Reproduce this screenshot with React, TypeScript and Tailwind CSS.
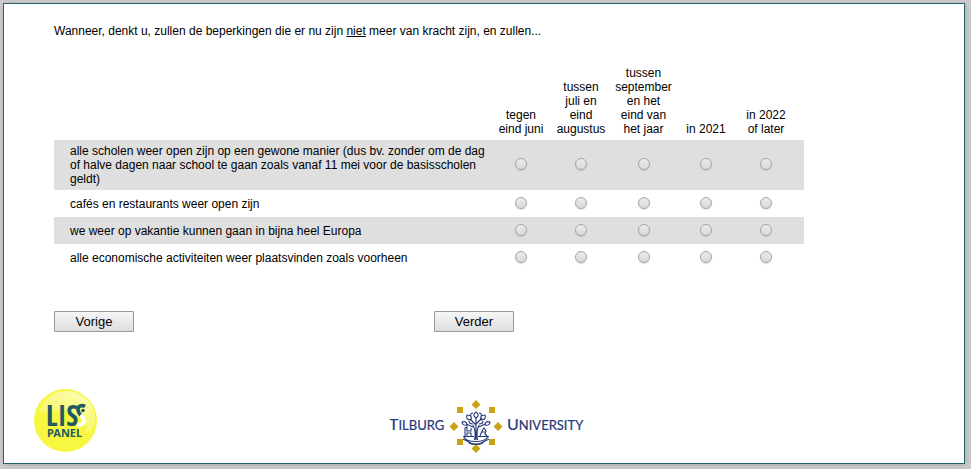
import React from "react";

const columns = [
  { label: "tegen eind juni", width: "w-[60px]" },
  { label: "tussen juli en eind augustus", width: "w-[60px]" },
  { label: "tussen september en het eind van het jaar", width: "w-[65px]" },
  { label: "in 2021", width: "w-[60px]" },
  { label: "in 2022 of later", width: "w-[60px]" },
];

const rows = [
  "alle scholen weer open zijn op een gewone manier (dus bv. zonder om de dag of halve dagen naar school te gaan zoals vanaf 11 mei voor de basisscholen geldt)",
  "cafés en restaurants weer open zijn",
  "we weer op vakantie kunnen gaan in bijna heel Europa",
  "alle economische activiteiten weer plaatsvinden zoals voorheen",
];

function NavButton({ children }: { children: string }) {
  return (
    <button
      type="button"
      className="h-[21px] w-20 rounded-[1px] border border-[#999] bg-linear-to-b from-[#f6f6f6] to-[#dedede] text-[13px] leading-[19px]"
    >
      {children}
    </button>
  );
}

function LissLogo() {
  return (
    <svg width="64" height="64" viewBox="0 0 64 64" role="img" aria-label="LISS Panel">
      <defs>
        <linearGradient id="liss-gloss" x1="0.8" y1="0" x2="0.3" y2="1">
          <stop offset="0" stopColor="#fff" stopOpacity="0.6" />
          <stop offset="1" stopColor="#fff" stopOpacity="0.05" />
        </linearGradient>
      </defs>
      <circle cx="31.500" cy="31.500" r="31.500" fill="#f7f742" />
      <path d="M5 24C9 9 20 2 33 2C50 2 61 16 61 30C61 37 57 42 52 45C55 27 33 17 5 24Z" fill="url(#liss-gloss)" />
      <text fill="#205a60" fontWeight="700">
        <tspan x="12" y="37" fontSize="29" fontFamily="'Open Sans Condensed','Liberation Sans Narrow','Liberation Sans',sans-serif">
          LIS
        </tspan>
        <tspan x="13" y="48" fontSize="11" fontFamily="'Noto Sans',sans-serif">
          PANEL
        </tspan>
      </text>
      <g fill="none" strokeWidth="3.600">
        <path d="M51 17.500C48 15.500 44 17 44 20.500C44 23.500 45.500 25 47.500 27" stroke="#205a60" />
        <path d="M46.500 26C49.500 28.500 50.500 30.500 50 33C49 36 46 36.500 43 35.500" stroke="#fff" />
      </g>
      <circle cx="49" cy="21.500" r="1.800" fill="#205a60" />
    </svg>
  );
}

function TilburgLogo() {
  return (
    <svg width="196" height="54" viewBox="0 0 196 54" role="img" aria-label="Tilburg University">
      <g fontFamily="'Lato',sans-serif" fill="#253878" stroke="#253878" strokeWidth="0.200">
        <text x="-1" y="30" fontSize="16">
          T<tspan fontSize="13">ILBURG</tspan>
        </text>
        <text x="117" y="30" fontSize="16">
          U<tspan fontSize="13">NIVERSITY</tspan>
        </text>
      </g>
      <g fill="#c9a416">
        <path d="M86 0l4.500 4.500L86 9l-4.500-4.500zM86 44l4.500 4.500L86 53l-4.500-4.500zM64 22l4.500 4.500L64 31l-4.500-4.500zM108 22l4.500 4.500L108 31l-4.500-4.500z" />
        <path d="M67 7h6v6h-6zM99 7h6v6h-6zM67 39h6v6h-6zM99 39h6v6h-6z" />
      </g>
      <g fill="none" stroke="#253878" strokeWidth="1.100">
        <path d="M84.500 40C86 34 85 29 83 25M87.500 40C86.500 34 87 29 89 25M86 40V18M86 25L80 19M86 24L92 18M83 27L76 24M89 27L95 24" />
        <path d="M86 18c-3-2-3-4 0-6c3 2 3 4 0 6zM81 20c-4 0-5-2-4-5c4 0 5 2 4 5zM91 20c4 0 5-2 4-5c-4 0-5 2-4 5zM77 25c-3 1-5-1-5-3c3-1 5 0 5 3zM95 25c3 1 5-1 5-3c-3-1-5 0-5 3zM83 24c-3 0-4-1-4-3M89 24c3 0 4-1 4-3M81 16c-1-2 0-3 2-3M91 16c1-2 0-3-2-3" />
        <path d="M75 36V28l2-1v4h4v-3M77 36v-3h4v3M90 36l2-5l2-3l2 3l-1 3l2 2M92 32h4" />
        <path d="M73 36.500h11M88 36.500h11M74 37c3 6 20 6 24 0M73 39l4 2c5 4 13 4 18 0l4-2M79 43c4 2 10 2 14 0" />
      </g>
    </svg>
  );
}

export default function App() {
  return (
    <div className="min-h-screen bg-[#cccbcc] pt-[3px] pr-1.5 pb-[5px] pl-[3px] font-['Liberation_Sans',Arial,sans-serif] text-xs leading-[14px] text-black">
      <main className="border border-[#246468] bg-white shadow-[1px_1px_5px_#aaaaaa]">
        <form className="px-[50px] pt-5" onSubmit={(e) => e.preventDefault()}>
          <p>
            Wanneer, denkt u, zullen de beperkingen die er nu zijn <u>niet</u> meer van kracht zijn, en zullen...
          </p>

          <table className="mt-7 w-full max-w-[750px] table-fixed border-collapse">
            <thead>
              <tr>
                <td />
                {columns.map((column, c) => (
                  <th
                    key={column.label}
                    id={`column-${c}`}
                    scope="col"
                    className={`${column.width} px-1 pb-1 text-center align-bottom font-normal`}
                  >
                    {column.label}
                  </th>
                ))}
                <td className="w-2" />
              </tr>
            </thead>
            <tbody>
              {rows.map((row, r) => (
                <tr key={row} className="h-[27px] odd:bg-[#dfdfdf]">
                  <th id={`row-${r}`} scope="row" className="py-1 pr-1 pl-4 text-left font-normal">
                    {row}
                  </th>
                  {columns.map((column, c) => (
                    <td key={column.label} className="pb-0.5 text-center">
                      <input
                        type="radio"
                        name={`question-${r}`}
                        aria-labelledby={`row-${r} column-${c}`}
                        className="mx-auto block size-3 appearance-none rounded-full border border-[#a6a6a6] bg-linear-to-b from-[#ececec] to-[#d9d9d9] shadow-[0_1px_1px_#00000022] checked:bg-[#555]"
                      />
                    </td>
                  ))}
                  <td />
                </tr>
              ))}
            </tbody>
          </table>

          <div className="mt-10 flex gap-[300px]">
            <NavButton>Vorige</NavButton>
            <NavButton>Verder</NavButton>
          </div>
        </form>

        <footer className="mt-14 flex items-center gap-[292px] pb-[9px] pl-[30px]">
          <LissLogo />
          <div className="pt-3">
            <TilburgLogo />
          </div>
        </footer>
      </main>
    </div>
  );
}
